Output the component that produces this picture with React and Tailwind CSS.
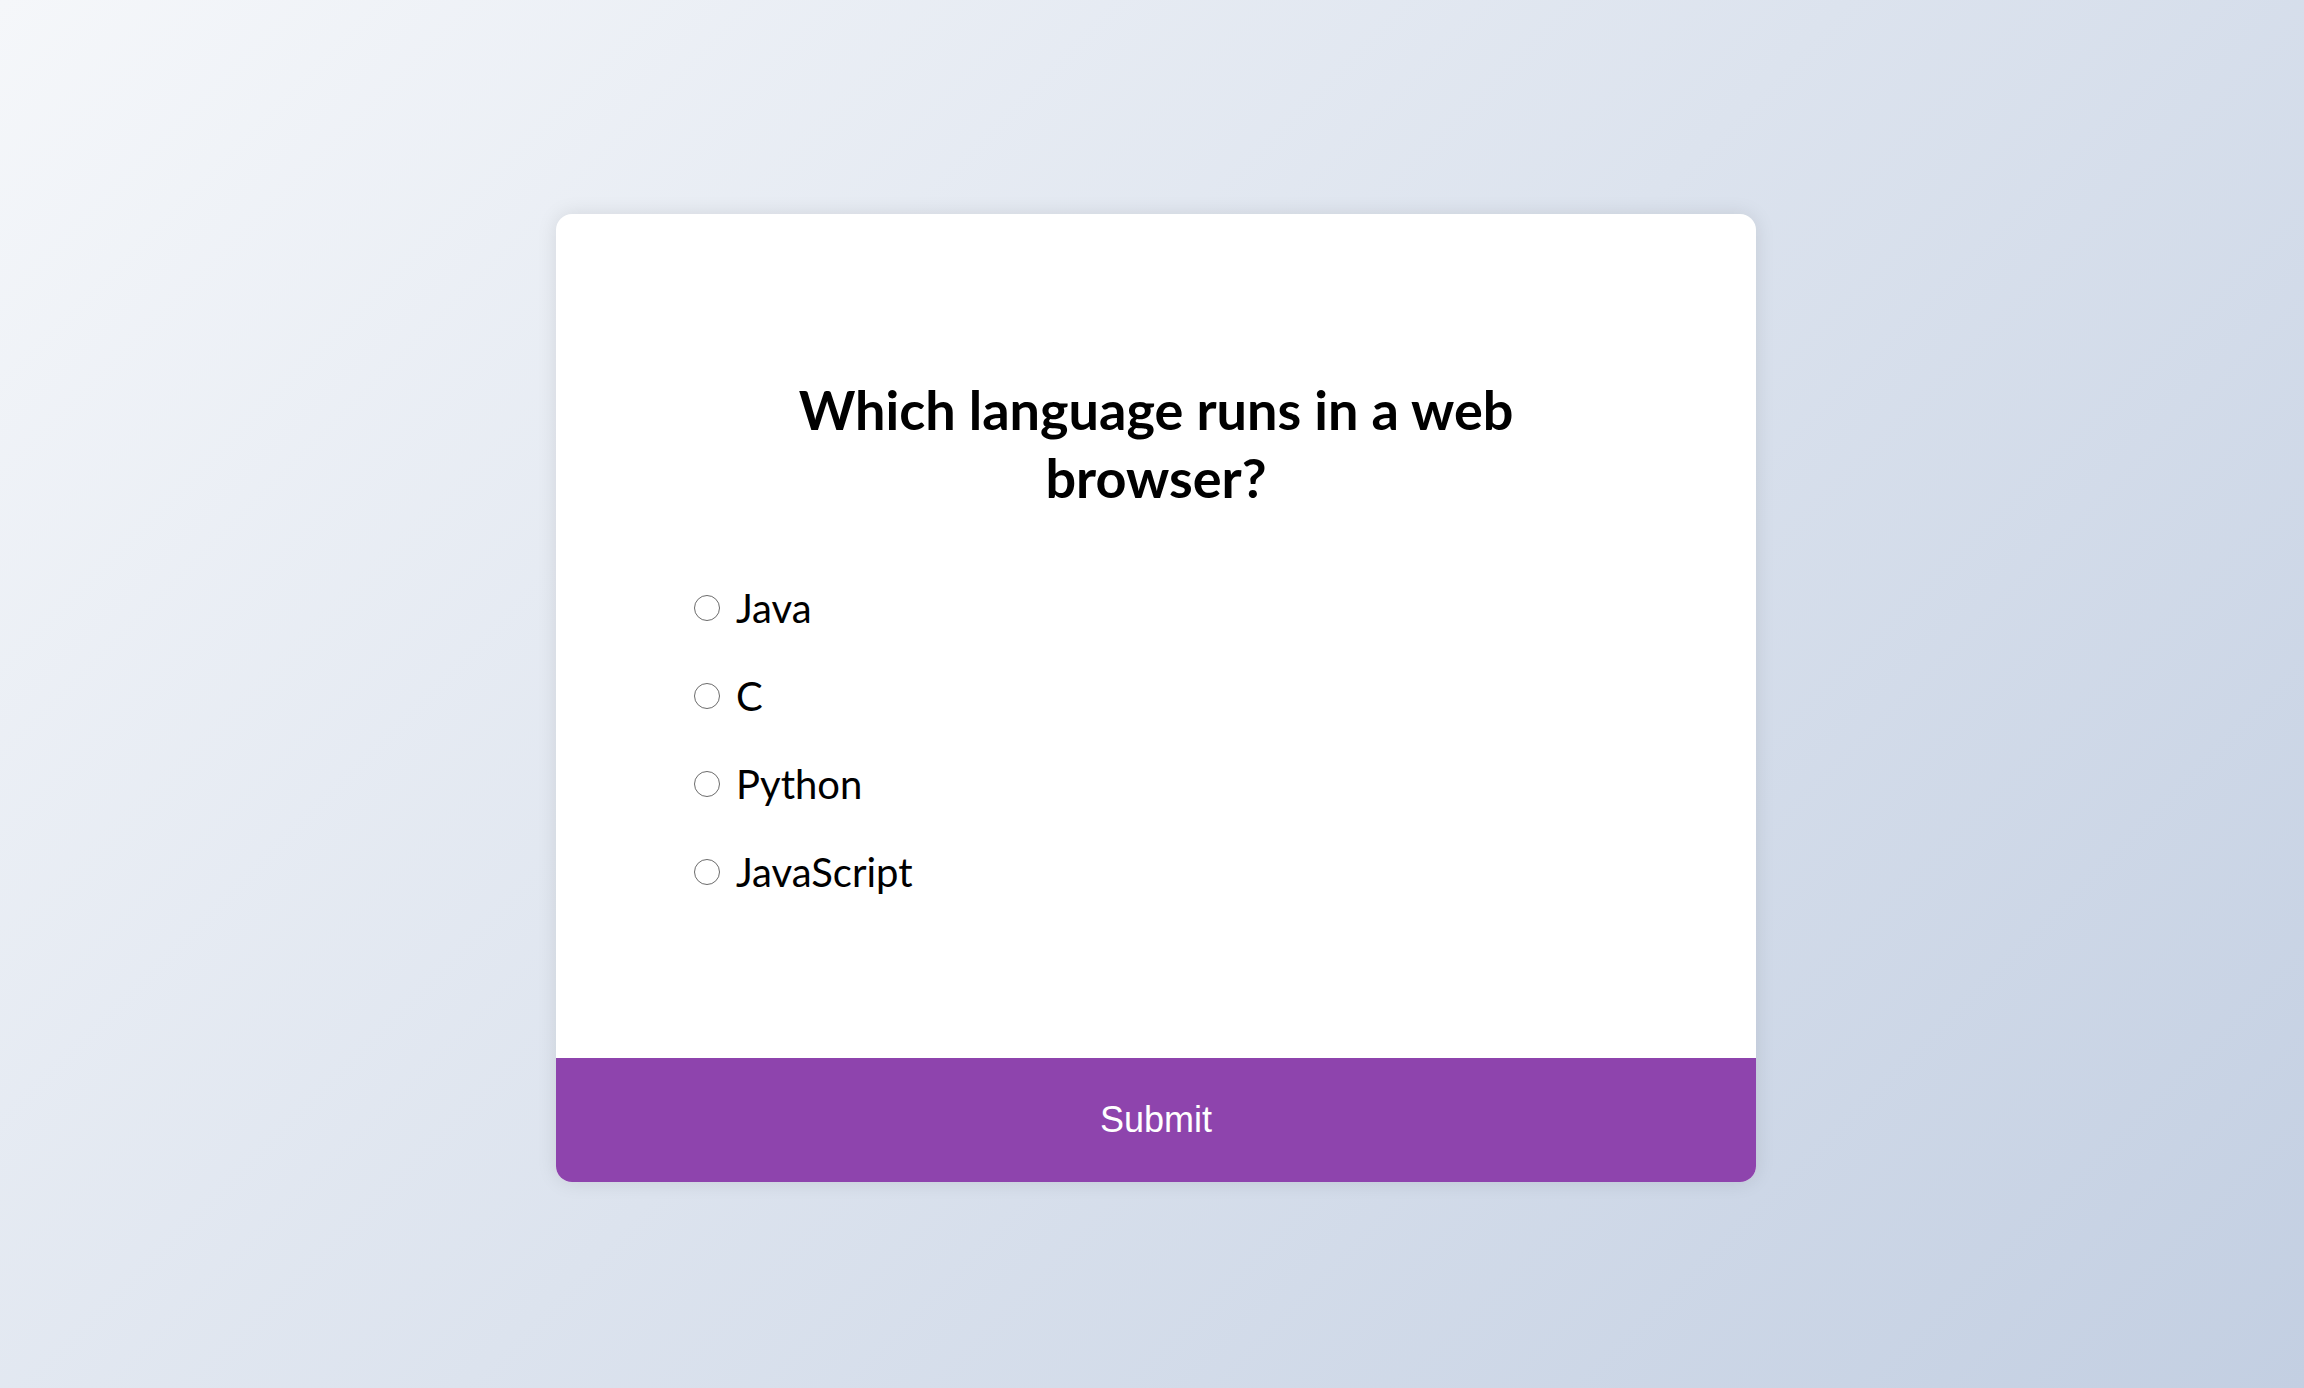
const OPTIONS = ['Java', 'C', 'Python', 'JavaScript'];

function Option({ label }) {
  return (
    <label className="flex items-center h-[40px] cursor-pointer">
      <span className="w-[26px] h-[26px] rounded-full border-[1.5px] border-[#6b6b6b] bg-white shrink-0" />
      <span className="ml-[16px] text-[40px] leading-none text-black">{label}</span>
    </label>
  );
}

export default function App() {
  return (
    <div className="min-h-screen w-full flex items-center justify-center bg-[linear-gradient(135deg,#f5f7fa_0%,#c3cfe2_100%)] pl-2 pt-2 font-['Lato','Noto_Sans',sans-serif]">
      <div className="w-[1200px] bg-white rounded-2xl overflow-hidden shadow-[0_0_20px_rgba(0,0,0,0.1)]">
        <div className="pt-[162px] pb-[166px]">
          <h2 className="mx-auto max-w-[820px] text-center text-[54px] leading-[68px] font-bold text-black">
            Which language runs in a web browser?
          </h2>
          <div className="mt-[76px] pl-[138px] flex flex-col gap-[48px]">
            {OPTIONS.map(o => (
              <Option key={o} label={o} />
            ))}
          </div>
        </div>
        <button className="w-full h-[124px] bg-[#8e44ad] text-white text-[36px] font-['Liberation_Sans',Arial,sans-serif]">
          Submit
        </button>
      </div>
    </div>
  );
}
